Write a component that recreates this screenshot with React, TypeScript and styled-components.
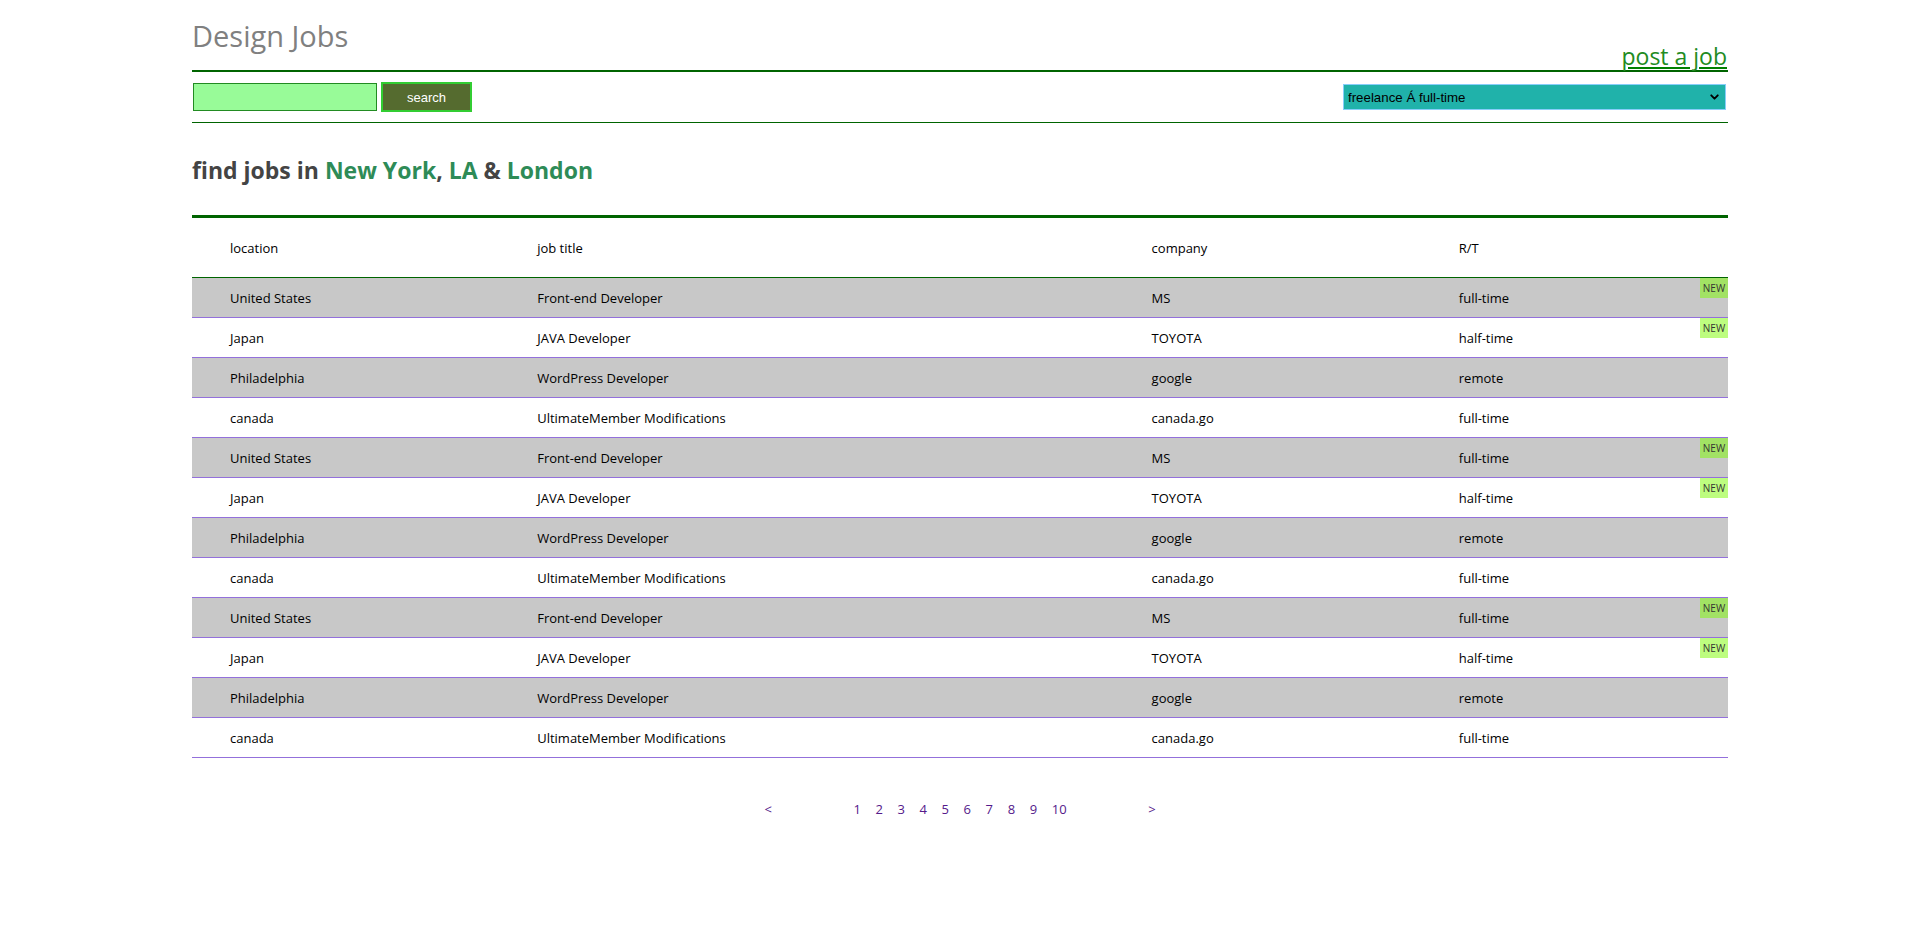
import React from "react";
import styled, { createGlobalStyle } from "styled-components";
import { ChevronDown } from "lucide-react";

const GlobalStyle = createGlobalStyle`
  html, body {
    margin: 0;
    padding: 0;
    background: #ffffff;
    font-family: "Open Sans", "Noto Sans", sans-serif;
    color: #000;
  }
  * { box-sizing: border-box; }
`;

const Page = styled.div`
  width: 80%;
  margin: 0 auto;
  padding-bottom: 60px;
`;

const Header = styled.header`
  display: flex;
  justify-content: space-between;
  align-items: flex-start;
  height: 72px;
  border-bottom: 2px solid #006400;
`;

const Title = styled.h1`
  margin: 18px 0 0 0;
  font-size: 29px;
  line-height: 36px;
  font-weight: 400;
  color: #808080;
`;

const PostLink = styled.a`
  align-self: flex-end;
  margin-bottom: 2px;
  font-size: 23px;
  line-height: 23px;
  color: #228b22;
  text-decoration: underline;
  text-decoration-color: #008000;
  margin-right: 1px;
`;

const Toolbar = styled.div`
  display: flex;
  justify-content: space-between;
  align-items: center;
  padding: 10px 0;
  border-bottom: 1px solid #006400;
`;

const SearchGroup = styled.form`
  display: flex;
  align-items: center;
  gap: 4px;
  margin: 0 0 0 1px;
`;

const SearchInput = styled.input`
  width: 184px;
  height: 28px;
  background: #98fb98;
  border: 1px solid #228b22;
  padding: 0 4px;
  outline: none;
`;

const SearchButton = styled.button`
  width: 91px;
  height: 30px;
  background: #556b2f;
  border: 2px solid #32cd32;
  color: #ffffff;
  font-family: "Liberation Sans", Arial, sans-serif;
  font-size: 13px;
  padding: 0;
  cursor: pointer;
`;

const SelectWrap = styled.div`
  position: relative;
  width: 383px;
  height: 26px;
  margin-right: 2px;
`;

const TypeSelect = styled.select`
  appearance: none;
  width: 100%;
  height: 100%;
  background: #20b2aa;
  border: 1px solid #87cefa;
  color: #000;
  font-family: "Liberation Sans", Arial, sans-serif;
  font-size: 13.3px;
  padding: 0 4px;
  border-radius: 0;
  outline: none;
`;

const SelectArrow = styled.span`
  position: absolute;
  right: 5px;
  top: 50%;
  transform: translateY(-50%);
  display: flex;
  pointer-events: none;
  color: #000;
`;

const Heading = styled.h2`
  margin: 32px 0 29px 0;
  font-size: 23px;
  line-height: 31px;
  font-weight: 700;
  color: #444444;
`;

const City = styled.span`
  color: #2e8b57;
`;

const Table = styled.table`
  width: 100%;
  table-layout: fixed;
  border-collapse: separate;
  border-spacing: 0;
  border-top: 3px solid #006400;
  font-size: 13px;
`;

const HeadCell = styled.th`
  text-align: left;
  font-weight: 400;
  padding: 0 0 0 38px;
  height: 60px;
  border-bottom: 1px solid #006400;
`;

const Row = styled.tr<{ $shaded: boolean }>`
  background: ${(p) => (p.$shaded ? "#c8c8c8" : "#ffffff")};
`;

const Cell = styled.td`
  position: relative;
  padding: 0 0 0 38px;
  height: 40px;
  border-bottom: 1px solid #9370db;
  white-space: nowrap;
`;

const NewBadge = styled.span`
  position: absolute;
  top: 0;
  right: 0;
  width: 28px;
  height: 20px;
  display: flex;
  align-items: center;
  justify-content: center;
  background: rgba(124, 252, 0, 0.5);
  color: #333;
  font-size: 10px;
  line-height: 1;
`;

const Pagination = styled.nav`
  display: flex;
  justify-content: center;
  align-items: center;
  margin-top: 40px;
  font-size: 13px;
  line-height: 22px;
`;

const PageLink = styled.a<{ $arrow?: "prev" | "next" }>`
  padding: 0 7.3px;
  color: #551a8b;
  text-decoration: none;
  margin-right: ${(p) => (p.$arrow === "prev" ? "67px" : "0")};
  margin-left: ${(p) => (p.$arrow === "next" ? "67px" : "0")};
`;

type Job = {
  loc: string;
  title: string;
  company: string;
  rt: string;
  isNew?: boolean;
};

const base: Job[] = [
  { loc: "United States", title: "Front-end Developer", company: "MS", rt: "full-time", isNew: true },
  { loc: "Japan", title: "JAVA Developer", company: "TOYOTA", rt: "half-time", isNew: true },
  { loc: "Philadelphia", title: "WordPress Developer", company: "google", rt: "remote" },
  { loc: "canada", title: "UltimateMember Modifications", company: "canada.go", rt: "full-time" },
];

const jobs: Job[] = [...base, ...base, ...base];

export default function App() {
  return (
    <>
      <GlobalStyle />
      <Page>
        <Header>
          <Title>Design Jobs</Title>
          <PostLink href="#">post a job</PostLink>
        </Header>
        <Toolbar>
          <SearchGroup onSubmit={(e) => e.preventDefault()}>
            <SearchInput type="text" />
            <SearchButton type="submit">search</SearchButton>
          </SearchGroup>
          <SelectWrap>
            <TypeSelect defaultValue="all">
              <option value="all">freelance Á full-time</option>
              <option value="freelance">freelance</option>
              <option value="full">full-time</option>
            </TypeSelect>
            <SelectArrow>
              <ChevronDown size={13} strokeWidth={3.5} />
            </SelectArrow>
          </SelectWrap>
        </Toolbar>
        <Heading>
          find jobs in <City>New York</City>, <City>LA</City> &amp; <City>London</City>
        </Heading>
        <Table>
          <colgroup>
            <col style={{ width: "20%" }} />
            <col style={{ width: "40%" }} />
            <col style={{ width: "20%" }} />
            <col style={{ width: "20%" }} />
          </colgroup>
          <thead>
            <tr>
              <HeadCell>location</HeadCell>
              <HeadCell>job title</HeadCell>
              <HeadCell>company</HeadCell>
              <HeadCell>R/T</HeadCell>
            </tr>
          </thead>
          <tbody>
            {jobs.map((j, i) => (
              <Row key={i} $shaded={i % 2 === 0}>
                <Cell>{j.loc}</Cell>
                <Cell>{j.title}</Cell>
                <Cell>{j.company}</Cell>
                <Cell>
                  {j.rt}
                  {j.isNew && <NewBadge>NEW</NewBadge>}
                </Cell>
              </Row>
            ))}
          </tbody>
        </Table>
        <Pagination>
          <PageLink href="#" $arrow="prev">&lt;</PageLink>
          {[1, 2, 3, 4, 5, 6, 7, 8, 9, 10].map((n) => (
            <PageLink href="#" key={n}>{n}</PageLink>
          ))}
          <PageLink href="#" $arrow="next">&gt;</PageLink>
        </Pagination>
      </Page>
    </>
  );
}
